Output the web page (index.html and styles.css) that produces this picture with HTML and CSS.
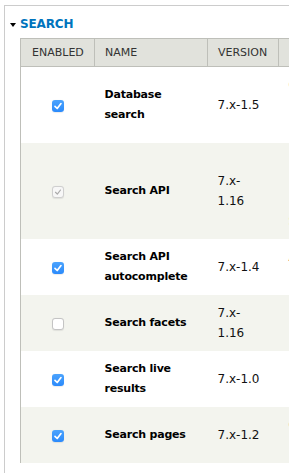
FILE: index.html
```html
<!DOCTYPE html>
<html>
<head>
<meta charset="utf-8">
<link rel="stylesheet" href="styles.css">
</head>
<body>
<div class="page">
  <div class="fieldset">
    <div class="legend"><span class="arrow"></span><span class="legend-text">SEARCH</span></div>
    <table class="modules">
      <colgroup>
        <col class="c-enabled"><col class="c-name"><col class="c-version"><col class="c-desc">
      </colgroup>
      <thead>
        <tr><th class="th-enabled">ENABLED</th><th>NAME</th><th>VERSION</th><th class="th-desc">DESCRIPTION</th></tr>
      </thead>
      <tbody>
        <tr class="odd">
          <td class="cb-cell"><span class="cb checked"><svg viewBox="0 0 12 12"><polyline points="3,6.3 5.2,8.5 9,3.6"/></svg></span></td>
          <td class="name">Database search</td>
          <td class="version">7.x-1.5</td>
          <td class="desc"><div>Offers an implementation of the Search API</div><div>Requires: Search API (enabled), Entity API</div><div>Required by: Search pages (enabled)</div></td>
        </tr>
        <tr class="even">
          <td class="cb-cell"><span class="cb disabled"><svg viewBox="0 0 12 12"><polyline points="3,6.3 5.2,8.5 9,3.6"/></svg></span></td>
          <td class="name">Search API</td>
          <td class="version">7.x-1.16</td>
          <td class="desc"><div>Provides a generic API for modules offering</div><div>Requires: Entity API (enabled)</div><div>Required by: Database search (enabled),</div><div>Search facets (disabled)</div></td>
        </tr>
        <tr class="odd">
          <td class="cb-cell"><span class="cb checked"><svg viewBox="0 0 12 12"><polyline points="3,6.3 5.2,8.5 9,3.6"/></svg></span></td>
          <td class="name">Search API autocomplete</td>
          <td class="version">7.x-1.4</td>
          <td class="desc"><div>Adds autocomplete capabilities</div><div>Requires: Search API (enabled)</div></td>
        </tr>
        <tr class="even">
          <td class="cb-cell"><span class="cb"></span></td>
          <td class="name">Search facets</td>
          <td class="version">7.x-1.16</td>
          <td class="desc"><div>Integrate the Search API with Facet API</div><div>Requires: Search API (enabled)</div></td>
        </tr>
        <tr class="odd">
          <td class="cb-cell"><span class="cb checked"><svg viewBox="0 0 12 12"><polyline points="3,6.3 5.2,8.5 9,3.6"/></svg></span></td>
          <td class="name">Search live results</td>
          <td class="version">7.x-1.0</td>
          <td class="desc"><div>Enable live search results</div><div>Requires: Search API (enabled)</div></td>
        </tr>
        <tr class="even">
          <td class="cb-cell"><span class="cb checked"><svg viewBox="0 0 12 12"><polyline points="3,6.3 5.2,8.5 9,3.6"/></svg></span></td>
          <td class="name">Search pages</td>
          <td class="version">7.x-1.2</td>
          <td class="desc"><div>Create pages for searching with Search API</div><div>Requires: Search API (enabled)</div></td>
        </tr>
      </tbody>
    </table>
  </div>
</div>
</body>
</html>
```
FILE: styles.css
```css
html, body {
  margin: 0;
  padding: 0;
  background: #fff;
}
body {
  font-family: "DejaVu Sans", Verdana, sans-serif;
  color: #000;
}
.page {
  width: 289px;
  height: 473px;
  overflow: hidden;
  padding: 5px 0 0 4px;
  box-sizing: border-box;
}
.fieldset {
  width: 760px;
  height: 600px;
  border: 1px solid #cccccc;
  box-sizing: border-box;
  padding: 10px 0 0 0;
}
.legend {
  display: flex;
  align-items: center;
  height: 16px;
  margin: 0 0 6px 5px;
}
.arrow {
  width: 0;
  height: 0;
  border-left: 3px solid transparent;
  border-right: 3px solid transparent;
  border-top: 4px solid #000;
  margin: 1px 4px 0 0;
}
.legend-text {
  color: #0074bd;
  font-weight: bold;
  font-size: 12px;
  letter-spacing: -0.15px;
  line-height: 16px;
}
.modules {
  margin-left: 15px;
  border-collapse: collapse;
  table-layout: fixed;
  width: 740px;
  border-left: 1px solid #bebfb9;
}
.c-enabled { width: 74px; }
.c-name { width: 113px; }
.c-version { width: 71px; }
.c-desc { width: 482px; }
.modules th {
  background: #e1e2dc;
  border: 1px solid #bebfb9;
  border-left: none;
  font-weight: normal;
  font-size: 11px;
  color: #333;
  text-align: left;
  height: 28px;
  padding: 0 10px;
  box-sizing: border-box;
  line-height: 14px;
}
.modules th.th-enabled {
  padding-left: 11px;
}
.modules th.th-desc {
  padding-left: 14px;
}
.modules td {
  vertical-align: middle;
  padding: 8px 10px;
  line-height: 20px;
  font-size: 12px;
}
tr.odd td { background: #ffffff; }
tr.even td { background: #f3f4ee; }
td.cb-cell {
  text-align: center;
  padding: 0;
}
td.name {
  font-weight: bold;
  font-size: 11px;
  letter-spacing: -0.2px;
  padding-right: 14px;
}
td.version {
  color: #111;
  padding-right: 16px;
}
td.desc {
  color: #333;
  white-space: nowrap;
}
.cb {
  display: inline-flex;
  width: 12px;
  height: 12px;
  box-sizing: border-box;
  border-radius: 3px;
  border: 1px solid #c4c4c4;
  background: #fff;
  vertical-align: middle;
  box-shadow: 0 0.5px 1px rgba(0,0,0,0.08);
}
.cb svg {
  width: 100%;
  height: 100%;
  display: block;
}
.cb polyline {
  fill: none;
  stroke-width: 1.7;
  stroke-linecap: round;
  stroke-linejoin: round;
}
.cb.checked {
  border: none;
  background: linear-gradient(#4ba3fd, #2b8afb);
}
.cb.checked svg {
  width: 12px;
  height: 12px;
}
.cb.checked polyline { stroke: #fff; }
.cb.disabled {
  background: #f7f7f7;
  border-color: #cfcfcf;
}
.cb.disabled polyline { stroke: #a9a9a9; stroke-width: 1.4; }
```
